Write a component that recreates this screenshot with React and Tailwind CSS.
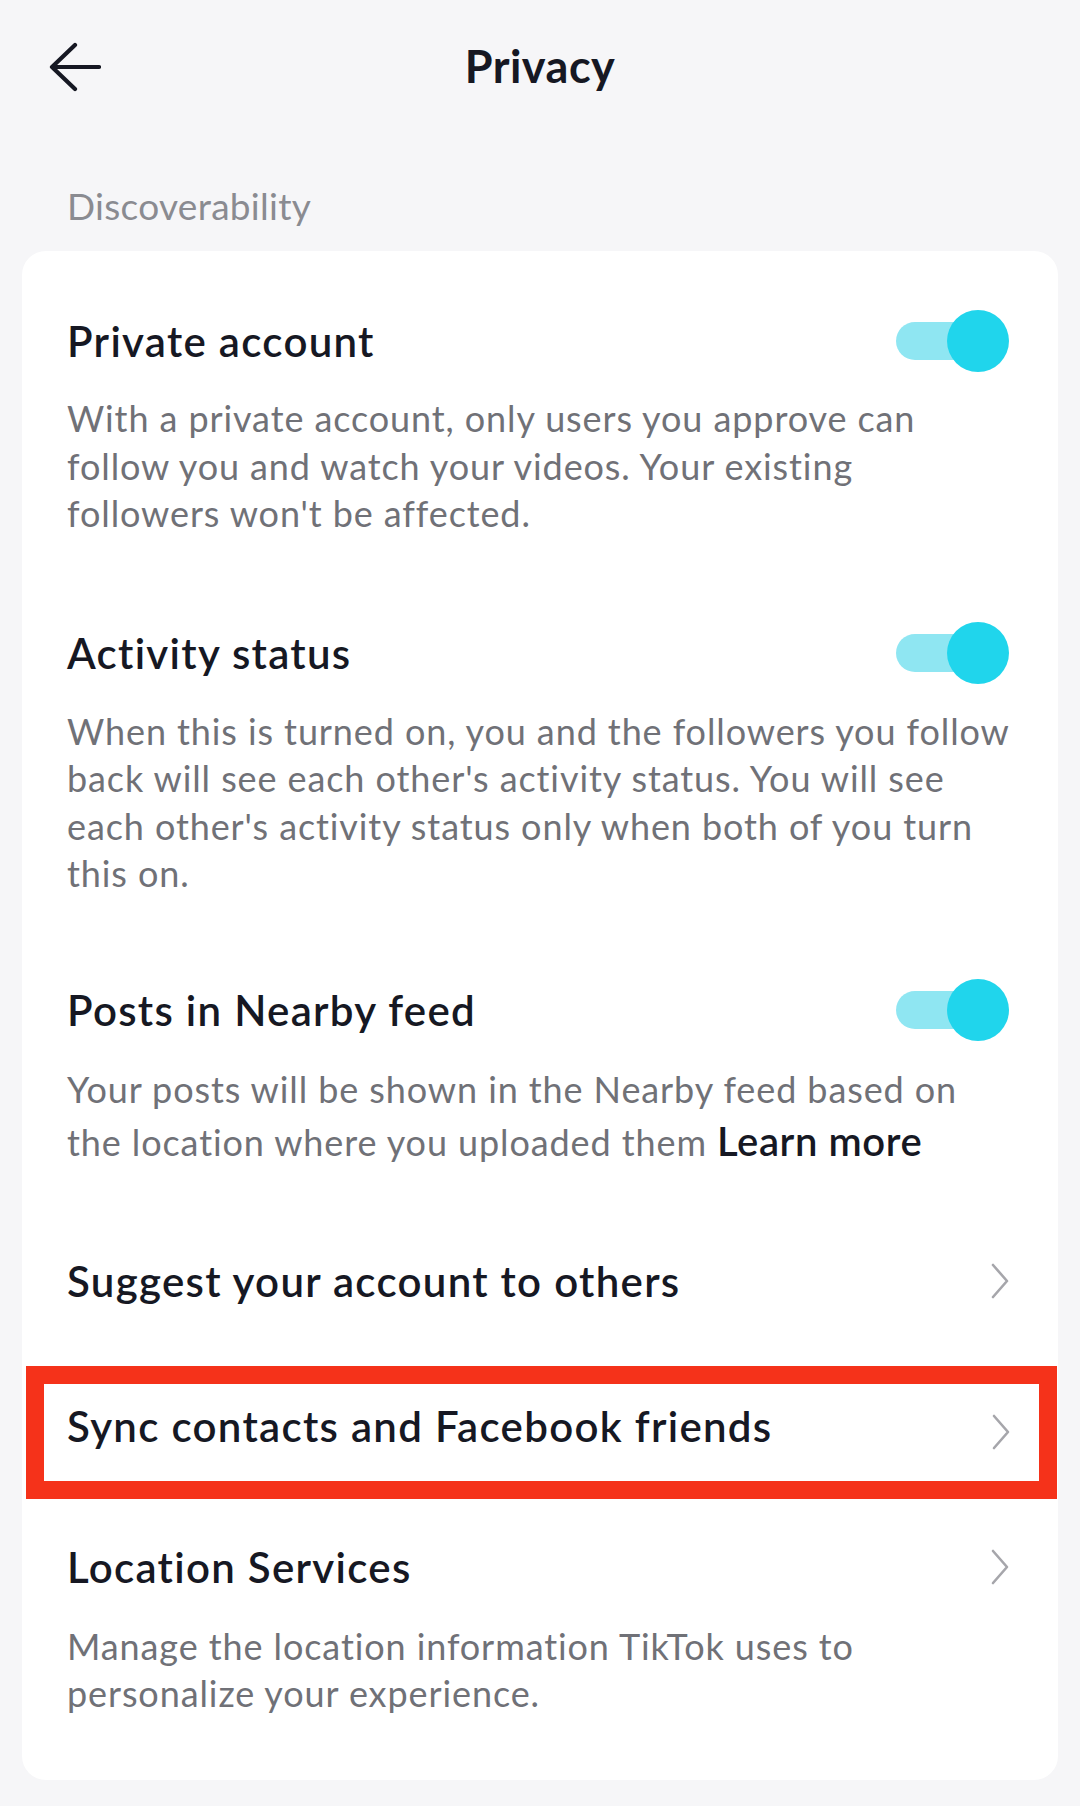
import React from 'react';

const Toggle = () => (
    <div className="relative w-[113px] h-[62px] shrink-0">
        <div className="absolute left-0 top-[12px] w-[96px] h-[38px] rounded-full bg-[#8fe6f2]" />
        <div className="absolute right-0 top-0 w-[62px] h-[62px] rounded-full bg-[#20d5ec]" />
    </div>
);

const Chevron = () => (
    <svg width="18" height="36" viewBox="0 0 18 36" className="shrink-0">
        <path d="M2 2 L16 18 L2 34" fill="none" stroke="#a6a6ab" strokeWidth="2.6" strokeLinecap="round" strokeLinejoin="round" />
    </svg>
);

const Title = ({ children }) => (
    <span className="text-[42px] leading-[44px] font-semibold text-[#161823] tracking-[1.3px] whitespace-nowrap">{children}</span>
);

// lines are broken where the reference breaks them
const Desc = ({ lines, className = '', children }) => (
    <p className={`text-[36px] tracking-[0.9px] text-[#707177] whitespace-nowrap ${className}`}>
        {lines.map((l, i) => (
            <span key={i} className="block">{l}{i === lines.length - 1 ? children : null}</span>
        ))}
    </p>
);

export default function App() {
    return (
        <div className="w-[1080px] h-[1806px] bg-[#f6f6f8] font-['Lato',sans-serif] overflow-hidden">
            {/* Header */}
            <header className="h-[134px] grid grid-cols-[1fr_auto_1fr] items-center">
                <div className="pl-[49px] flex items-center">
                    <svg width="52" height="50" viewBox="0 0 52 50">
                        <path d="M26 3 L3 25 L26 47 M3 25 L50 25" fill="none" stroke="#161823" strokeWidth="4.2" strokeLinecap="round" strokeLinejoin="round" />
                    </svg>
                </div>
                <h1 className="text-[45px] font-bold text-[#161823] tracking-[0.5px]">Privacy</h1>
                <div />
            </header>

            <div className="mt-[52px] pl-[67px] text-[37px] leading-[40px] tracking-[0.3px] text-[#8a8b91]">Discoverability</div>

            {/* Card */}
            <div className="mt-[25px] mx-[22px] bg-white rounded-[24px] pb-[62px]">
                <div className="pl-[45px] pr-[49px] pt-[68px]">
                    <div className="flex items-center justify-between h-[44px]">
                        <Title>Private account</Title>
                        <Toggle />
                    </div>
                    <Desc
                        className="mt-[32px] leading-[47.5px]"
                        lines={[
                            'With a private account, only users you approve can',
                            'follow you and watch your videos. Your existing',
                            "followers won't be affected.",
                        ]}
                    />

                    <div className="mt-[93px] flex items-center justify-between h-[44px]">
                        <Title>Activity status</Title>
                        <Toggle />
                    </div>
                    <Desc
                        className="mt-[33px] leading-[47.5px]"
                        lines={[
                            'When this is turned on, you and the followers you follow',
                            "back will see each other's activity status. You will see",
                            "each other's activity status only when both of you turn",
                            'this on.',
                        ]}
                    />

                    <div className="mt-[90px] flex items-center justify-between h-[44px]">
                        <Title>Posts in Nearby feed</Title>
                        <Toggle />
                    </div>
                    <Desc
                        className="mt-[31px] leading-[52px]"
                        lines={[
                            'Your posts will be shown in the Nearby feed based on',
                            'the location where you uploaded them ',
                        ]}
                    >
                        <span className="text-[40px] font-semibold text-[#161823] tracking-[0.6px]">Learn more</span>
                    </Desc>

                    <div className="mt-[91px] flex items-center justify-between h-[44px]">
                        <Title>Suggest your account to others</Title>
                        <Chevron />
                    </div>
                </div>

                {/* Highlighted row */}
                <div className="mt-[63px] ml-[4px] mr-[1px] border-[18px] border-[#f5321a] h-[133px] flex items-center justify-between pl-[23px] pr-[29px]">
                    <div className="-mt-[12px]">
                        <Title>Sync contacts and Facebook friends</Title>
                    </div>
                    <Chevron />
                </div>

                <div className="pl-[45px] pr-[49px] mt-[46px]">
                    <div className="flex items-center justify-between h-[44px]">
                        <Title>Location Services</Title>
                        <Chevron />
                    </div>
                    <Desc
                        className="mt-[34px] leading-[47.5px]"
                        lines={[
                            'Manage the location information TikTok uses to',
                            'personalize your experience.',
                        ]}
                    />
                </div>
            </div>
        </div>
    );
}
